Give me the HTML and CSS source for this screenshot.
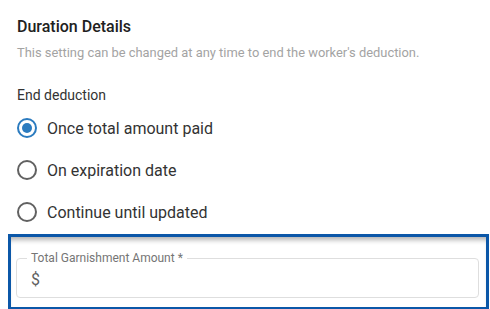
FILE: index.html
```html
<!DOCTYPE html>
<html lang="en">

<head>
    <meta charset="UTF-8">
    <meta name="viewport" content="width=device-width, initial-scale=1.0">
    <title>Duration Details</title>
    <link rel="stylesheet" href="styles.css">
</head>

<body>
    <div class="section">
        <h2 class="title">Duration Details</h2>
        <p class="subtitle">This setting can be changed at any time to end the worker's deduction.</p>

        <div class="group-label">End deduction</div>
        <div class="radio-list">
            <label class="radio-row">
                <input type="radio" name="endDeduction" checked>
                <span class="radio-dot"></span>
                <span class="radio-text">Once total amount paid</span>
            </label>
            <label class="radio-row">
                <input type="radio" name="endDeduction">
                <span class="radio-dot"></span>
                <span class="radio-text">On expiration date</span>
            </label>
            <label class="radio-row">
                <input type="radio" name="endDeduction">
                <span class="radio-dot"></span>
                <span class="radio-text">Continue until updated</span>
            </label>
        </div>
    </div>

    <!-- highlighted amount field -->
    <div class="highlight">
        <fieldset class="field">
            <legend>Total Garnishment Amount *</legend>
            <div class="field-input">
                <span class="prefix">$</span>
                <input type="text" id="amountInput">
            </div>
        </fieldset>
    </div>
</body>

</html>
```

FILE: styles.css
```css
html, body {
    margin: 0;
    padding: 0;
    background-color: #fff;
    font-family: Roboto, "Liberation Sans", sans-serif;
    overflow: hidden;
}

.section {
    padding: 16px 17px 0 17px;
}

.title {
    margin: 0;
    font-size: 16px;
    font-weight: 500;
    line-height: 22px;
    color: #212121;
}

.subtitle {
    margin: 6px 0 0 0;
    font-size: 12.9px;
    line-height: 18px;
    color: #a3a3a3;
}

.group-label {
    margin-top: 23px;
    font-size: 14px;
    line-height: 20px;
    color: #333;
}

.radio-list {
    margin-top: 2px;
}

.radio-row {
    display: flex;
    align-items: center;
    height: 42px;
    cursor: pointer;
}

.radio-row input {
    display: none;
}

/* custom radio circle */
.radio-dot {
    box-sizing: border-box;
    width: 20px;
    height: 20px;
    border: 2px solid #616161;
    border-radius: 50%;
    margin-right: 10px;
    position: relative;
}

.radio-row input:checked + .radio-dot {
    border-color: #2b7bbf;
}

.radio-row input:checked + .radio-dot::after {
    content: "";
    position: absolute;
    left: 3px;
    top: 3px;
    width: 10px;
    height: 10px;
    border-radius: 50%;
    background-color: #2b7bbf;
}

.radio-text {
    font-size: 16px;
    color: #333;
}

.highlight {
    box-sizing: border-box;
    margin: 1px 1px 0 8px;
    height: 76px;
    border: 3px solid #0b57a8;
    padding: 15px 7px 0 5px;
    box-shadow: inset 0 6px 5px -3px rgba(0, 0, 0, 0.3);
}

.field {
    margin: 0;
    padding: 0 14px;
    border: 1px solid #dedede;
    border-radius: 4px;
    height: 46px;
    box-sizing: border-box;
}

.field legend {
    padding: 0 4px;
    margin-left: -4px;
    font-size: 12px;
    line-height: 12px;
    color: #757575;
}

.field-input {
    display: flex;
    align-items: center;
    margin-top: 5px;
}

.prefix {
    font-size: 16px;
    color: #616161;
}

.field-input input {
    flex: 1;
    border: none;
    outline: none;
    font-size: 16px;
    font-family: inherit;
    background: transparent;
}
```
